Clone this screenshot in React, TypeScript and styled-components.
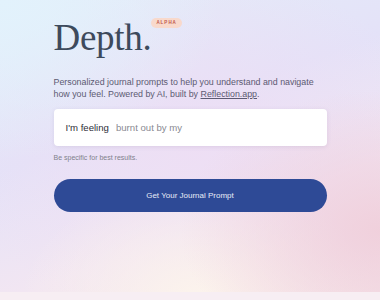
import React from "react";
import styled, { createGlobalStyle } from "styled-components";

const Global = createGlobalStyle`
  html, body { margin: 0; padding: 0; }
  body {
    background: #f7eef3;
    font-family: "Liberation Sans", Arial, sans-serif;
  }
`;

const Page = styled.div`
  height: 292px;
  overflow: hidden;
  background:
    radial-gradient(ellipse 200px 140px at 380px 230px, rgba(240, 206, 218, 0.9), rgba(240, 206, 218, 0) 100%),
    radial-gradient(ellipse 180px 120px at 200px 300px, rgba(252, 244, 236, 1), rgba(252, 244, 236, 0) 100%),
    radial-gradient(ellipse 220px 160px at 0px 0px, rgba(226, 242, 252, 1), rgba(226, 242, 252, 0) 100%),
    radial-gradient(ellipse 240px 180px at 200px 150px, rgba(238, 222, 244, 0.9), rgba(238, 222, 244, 0) 100%),
    linear-gradient(160deg, #e4eef9 0%, #e4e2f8 40%, #f2e6f2 70%, #f4e4ea 100%);
  display: flex;
  justify-content: center;
`;

const Column = styled.main`
  width: 273px;
  padding-top: 15px;
  display: flex;
  flex-direction: column;
`;

const TitleRow = styled.div`
  display: flex;
  align-items: flex-start;
`;

const Title = styled.h1`
  margin: 0;
  font-family: "Liberation Serif", "Times New Roman", serif;
  font-weight: 400;
  font-size: 37px;
  line-height: 46px;
  letter-spacing: -0.3px;
  color: #3d4a5c;
`;

const Badge = styled.span`
  margin-top: 3px;
  padding: 2px 5px;
  border-radius: 6px;
  background: #f8d9cc;
  color: #c0574a;
  font-size: 4.5px;
  font-weight: 700;
  letter-spacing: 1px;
  line-height: 6px;
`;

const Lead = styled.p`
  margin: 16px 0 0;
  font-size: 8.85px;
  line-height: 11.5px;
  color: #5c5a72;
`;

const Link = styled.a`
  color: #5c5a72;
  text-decoration: underline;
`;

const Card = styled.div`
  margin-top: 9px;
  height: 37px;
  background: #ffffff;
  border-radius: 4px;
  box-shadow: 0 1px 4px rgba(120, 100, 150, 0.15);
  display: flex;
  align-items: center;
  padding: 0 12px;
  gap: 7px;
`;

const Label = styled.span`
  font-size: 9.6px;
  font-weight: 500;
  color: #2e2e38;
  white-space: nowrap;
`;

const Field = styled.input`
  flex: 1;
  border: 0;
  outline: 0;
  background: transparent;
  padding: 0;
  font-family: "Liberation Sans", Arial, sans-serif;
  font-size: 9.6px;
  color: #333;
  &::placeholder { color: #8a8a92; }
`;

const Hint = styled.p`
  margin: 8px 0 0;
  font-size: 7px;
  line-height: 8px;
  color: #80808c;
`;

const Button = styled.button`
  margin-top: 17px;
  height: 33px;
  border: 0;
  border-radius: 17px;
  background: #2e4a96;
  color: #e6eaf6;
  font-family: "Liberation Sans", Arial, sans-serif;
  font-size: 8px;
  cursor: pointer;
`;

export default function App() {
  return (
    <>
      <Global />
      <Page>
        <Column>
          <TitleRow>
            <Title>Depth.</Title>
            <Badge>ALPHA</Badge>
          </TitleRow>
          <Lead>
            Personalized journal prompts to help you understand and navigate how you feel. Powered by AI, built by{" "}
            <Link href="#">Reflection.app</Link>.
          </Lead>
          <Card>
            <Label>I'm feeling</Label>
            <Field placeholder="burnt out by my" />
          </Card>
          <Hint>Be specific for best results.</Hint>
          <Button>Get Your Journal Prompt</Button>
        </Column>
      </Page>
    </>
  );
}
